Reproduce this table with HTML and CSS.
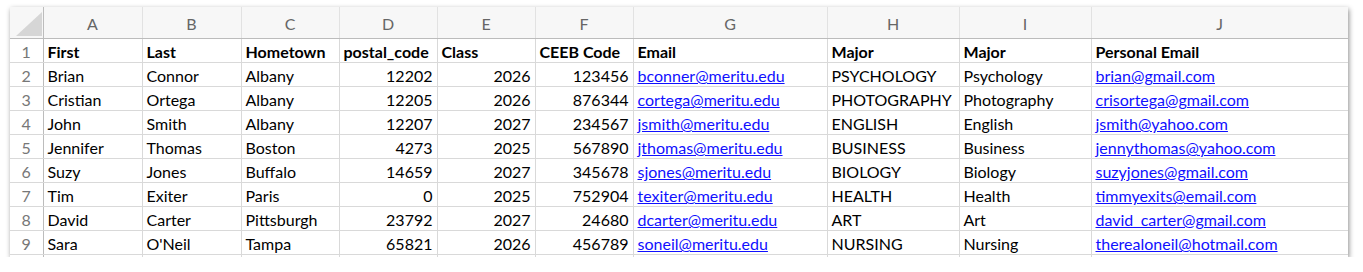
FILE: index.html
```html
<!DOCTYPE html>
<html lang="en">
<head>
    <meta charset="UTF-8">
    <title>Students</title>
    <link rel="stylesheet" href="styles.css">
</head>
<body>
    <div class="sheet">
        <table class="grid">
            <colgroup>
                <col class="c-head">
                <col class="c-sm"><col class="c-sm"><col class="c-md"><col class="c-md"><col class="c-md"><col class="c-md">
                <col class="c-email"><col class="c-major"><col class="c-major"><col class="c-personal">
            </colgroup>
            <thead>
                <tr>
                    <th class="corner">
                        <svg width="28" height="26" viewBox="0 0 28 26"><polygon points="27,1 27,25 1,25" fill="#d6d6d6"/></svg>
                    </th>
                    <th>A</th><th>B</th><th>C</th><th>D</th><th>E</th><th>F</th><th>G</th><th>H</th><th>I</th><th>J</th>
                </tr>
            </thead>
            <tbody>
                <tr class="titles">
                    <td class="num">1</td>
                    <td>First</td><td>Last</td><td>Hometown</td><td>postal_code</td><td>Class</td><td>CEEB Code</td><td>Email</td><td>Major</td><td>Major</td><td>Personal Email</td>
                </tr>
                <tr>
                    <td class="num">2</td>
                    <td>Brian</td><td>Connor</td><td>Albany</td><td class="r">12202</td><td class="r">2026</td><td class="r">123456</td><td><a href="#">bconner@meritu.edu</a></td><td>PSYCHOLOGY</td><td>Psychology</td><td><a href="#">brian@gmail.com</a></td>
                </tr>
                <tr>
                    <td class="num">3</td>
                    <td>Cristian</td><td>Ortega</td><td>Albany</td><td class="r">12205</td><td class="r">2026</td><td class="r">876344</td><td><a href="#">cortega@meritu.edu</a></td><td>PHOTOGRAPHY</td><td>Photography</td><td><a href="#">crisortega@gmail.com</a></td>
                </tr>
                <tr>
                    <td class="num">4</td>
                    <td>John</td><td>Smith</td><td>Albany</td><td class="r">12207</td><td class="r">2027</td><td class="r">234567</td><td><a href="#">jsmith@meritu.edu</a></td><td>ENGLISH</td><td>English</td><td><a href="#">jsmith@yahoo.com</a></td>
                </tr>
                <tr>
                    <td class="num">5</td>
                    <td>Jennifer</td><td>Thomas</td><td>Boston</td><td class="r">4273</td><td class="r">2025</td><td class="r">567890</td><td><a href="#">jthomas@meritu.edu</a></td><td>BUSINESS</td><td>Business</td><td><a href="#">jennythomas@yahoo.com</a></td>
                </tr>
                <tr>
                    <td class="num">6</td>
                    <td>Suzy</td><td>Jones</td><td>Buffalo</td><td class="r">14659</td><td class="r">2027</td><td class="r">345678</td><td><a href="#">sjones@meritu.edu</a></td><td>BIOLOGY</td><td>Biology</td><td><a href="#">suzyjones@gmail.com</a></td>
                </tr>
                <tr>
                    <td class="num">7</td>
                    <td>Tim</td><td>Exiter</td><td>Paris</td><td class="r">0</td><td class="r">2025</td><td class="r">752904</td><td><a href="#">texiter@meritu.edu</a></td><td>HEALTH</td><td>Health</td><td><a href="#">timmyexits@email.com</a></td>
                </tr>
                <tr>
                    <td class="num">8</td>
                    <td>David</td><td>Carter</td><td>Pittsburgh</td><td class="r">23792</td><td class="r">2027</td><td class="r">24680</td><td><a href="#">dcarter@meritu.edu</a></td><td>ART</td><td>Art</td><td><a href="#">david_carter@gmail.com</a></td>
                </tr>
                <tr>
                    <td class="num">9</td>
                    <td>Sara</td><td>O'Neil</td><td>Tampa</td><td class="r">65821</td><td class="r">2026</td><td class="r">456789</td><td><a href="#">soneil@meritu.edu</a></td><td>NURSING</td><td>Nursing</td><td><a href="#">therealoneil@hotmail.com</a></td>
                </tr>
                <tr class="cut">
                    <td class="num"></td>
                    <td></td><td></td><td></td><td></td><td></td><td></td><td></td><td></td><td></td><td></td>
                </tr>
            </tbody>
        </table>
    </div>
</body>
</html>
```

FILE: styles.css
```css
body {
    margin: 0;
    padding: 7px 0 0 10px;
    background-color: white;
    font-family: Lato, "Open Sans", sans-serif;
}

.sheet {
    width: 1338px;
    height: 250px;
    overflow: hidden;
    background-color: white;
    box-shadow: 1px 2px 5px rgba(0, 0, 0, 0.45);
}

.grid {
    table-layout: fixed;
    border-collapse: collapse;
    width: 1338px;
    font-size: 16px;
    color: #000;
}

.c-head { width: 33px; }
.c-sm { width: 99px; }
.c-md { width: 98px; }
.c-email { width: 194px; }
.c-major { width: 132px; }
.c-personal { width: 257px; }

.grid th {
    height: 29px;
    padding: 2px 0 0;
    background-color: #f7f7f7;
    border-left: 1px solid #e2e2e2;
    border-bottom: 1px solid #bcbcbc;
    color: #666;
    font-weight: normal;
    font-size: 16px;
    text-align: center;
}

.grid th.corner {
    height: 31px;
    padding: 0;
    border-left: none;
    border-right: 1px solid #bcbcbc;
    vertical-align: bottom;
    text-align: right;
    line-height: 0;
}

.grid th.corner svg {
    margin-bottom: 1px;
}

.grid td {
    height: 21px;
    padding: 2px 4px 0;
    line-height: 21px;
    border: 1px solid #d9d9d9;
    border-top: none;
    white-space: nowrap;
    overflow: hidden;
}

.grid td.num {
    padding: 2px 0 0;
    text-align: center;
    color: #777;
    border-left: none;
    border-right: 1px solid #bcbcbc;
}

.grid td.r {
    text-align: right;
}

.titles td {
    font-weight: bold;
}

.titles td.num {
    font-weight: normal;
}

.grid a {
    color: #1010ff;
    text-decoration: underline;
}

.cut td {
    height: 6px;
    border-bottom: none;
}
```
